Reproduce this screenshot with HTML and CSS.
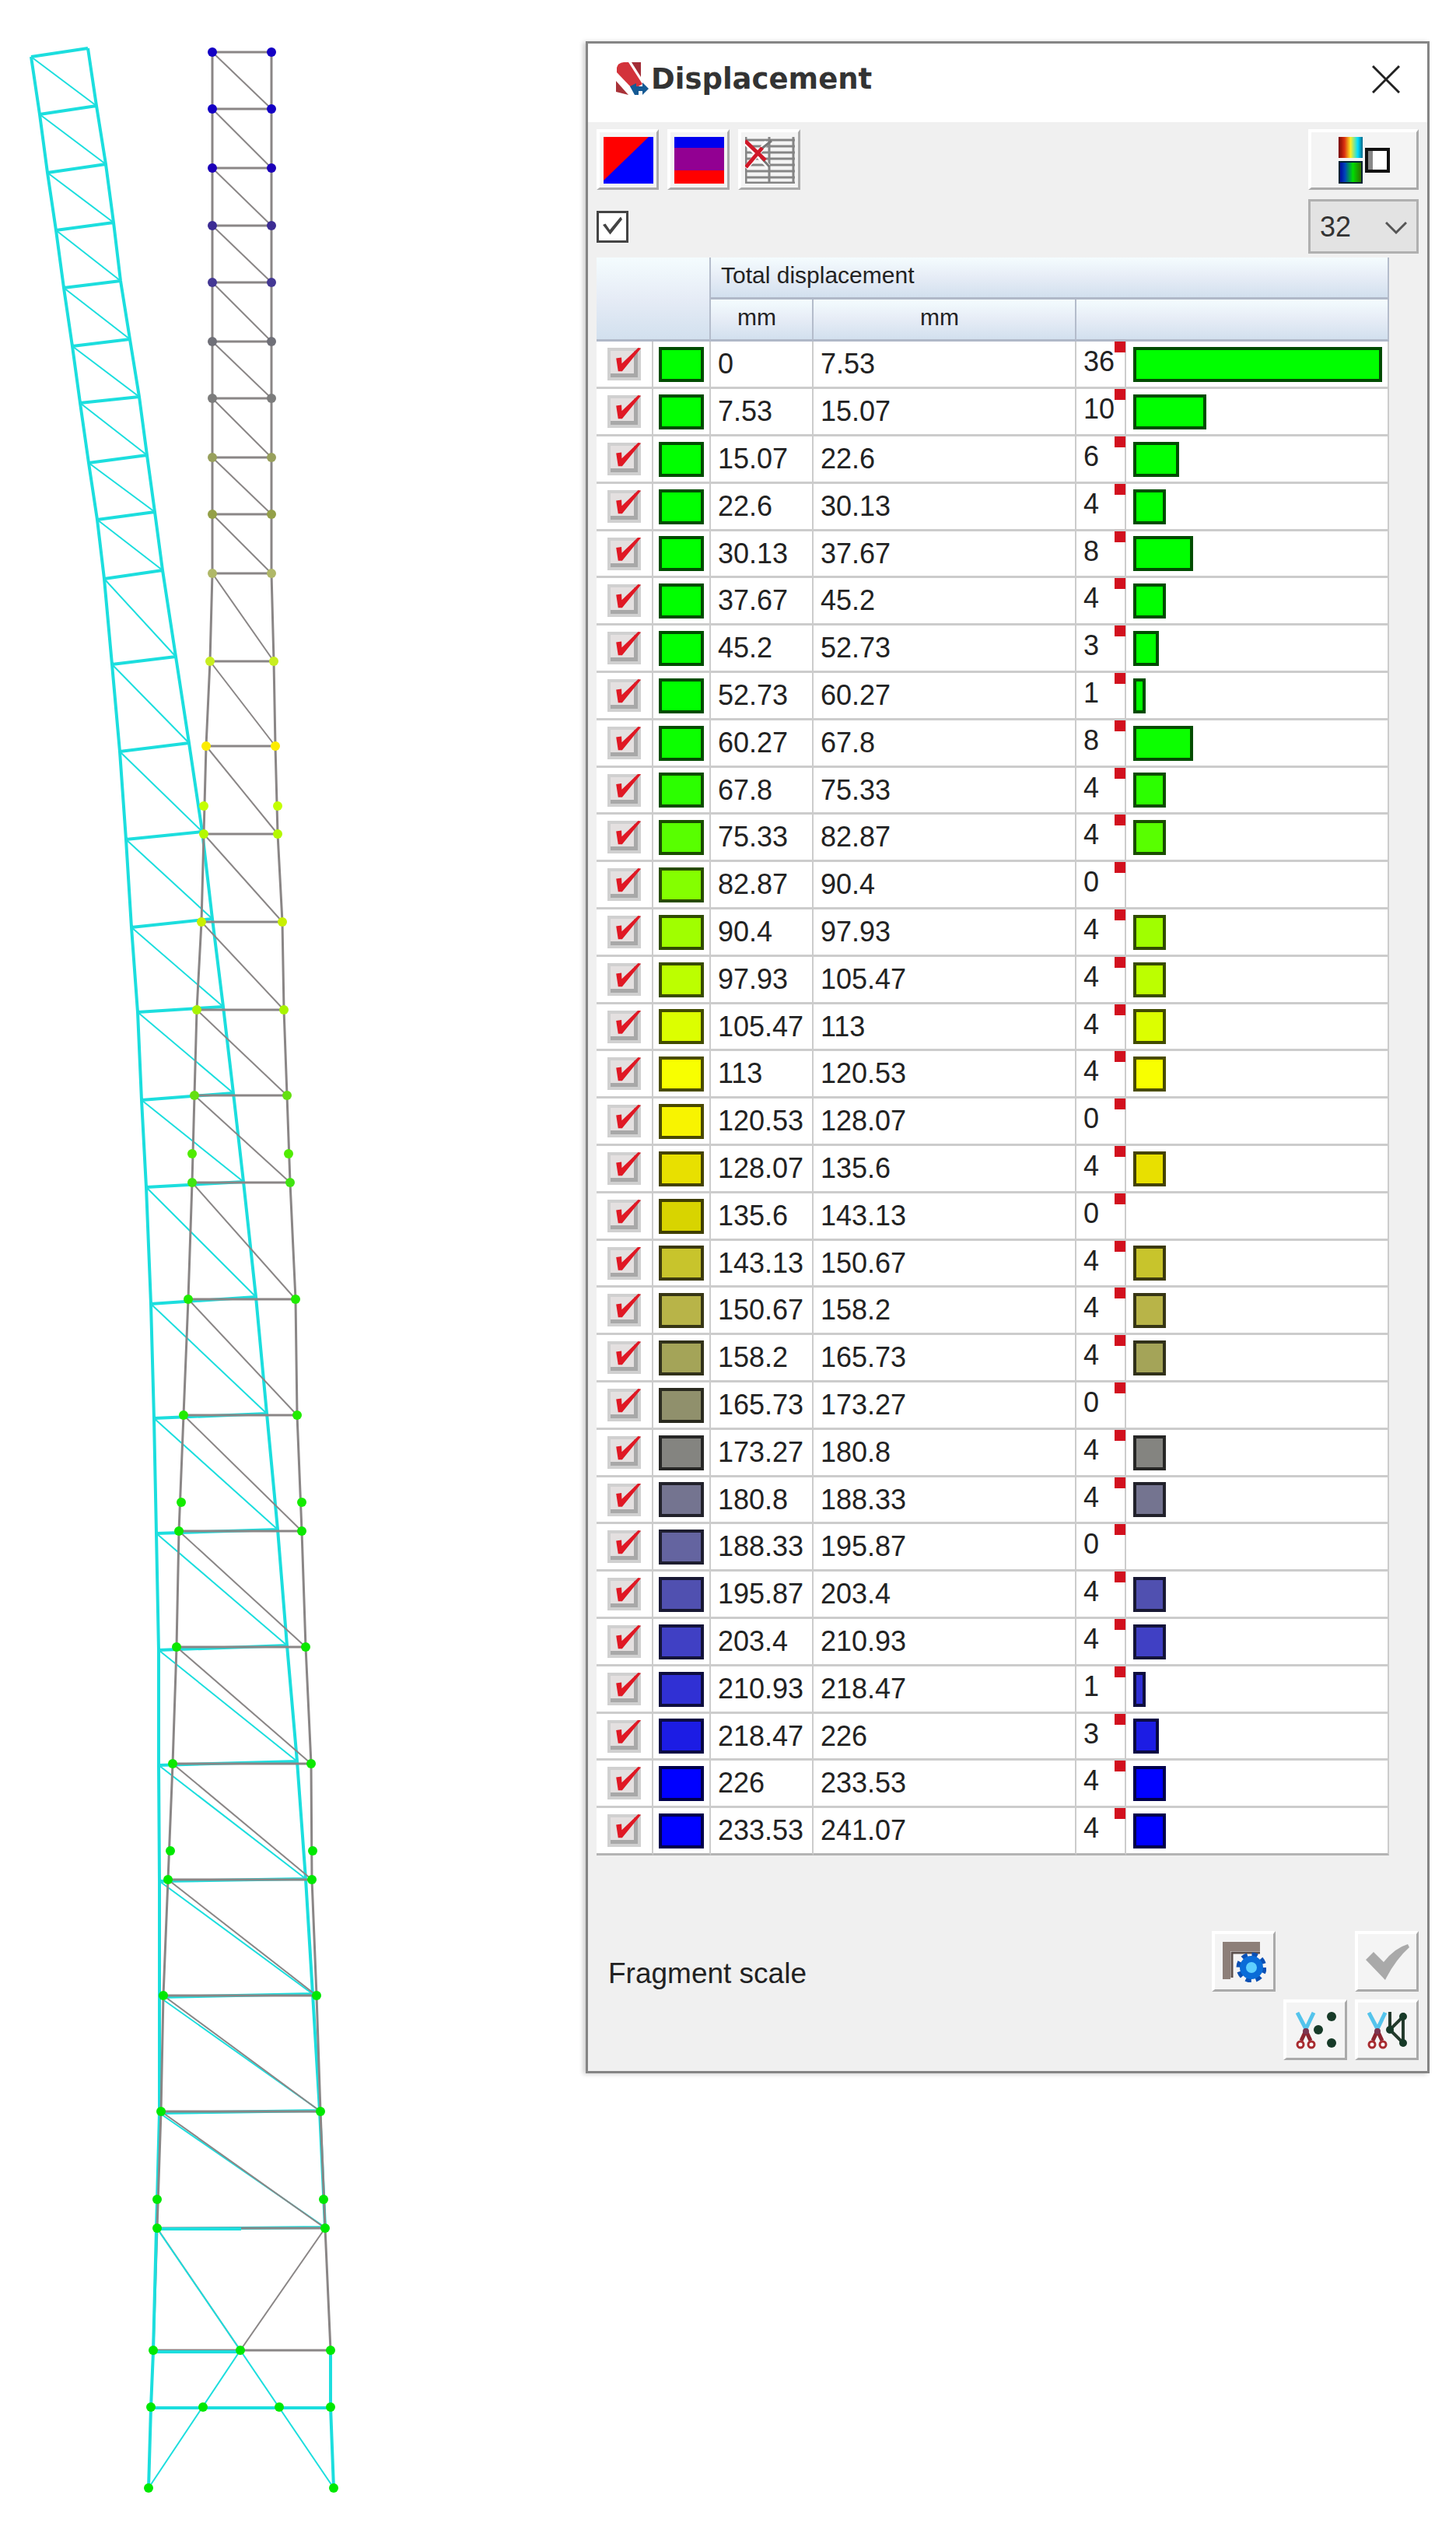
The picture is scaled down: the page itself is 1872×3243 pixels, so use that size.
FILE: index.html
```
<!DOCTYPE html>
<html lang="en">

<head>
    <meta charset="UTF-8">
    <meta name="viewport" content="width=device-width, initial-scale=1.0">
    <title>Displacement</title>
    <link rel="stylesheet" href="styles.css">
</head>

<body>
    <main class="workspace">
        <svg id="tower" class="tower" viewBox="0 0 753 3243" role="img" aria-label="Tower, deformed and original shape"></svg>

        <section class="panel">
            <header class="titlebar">
                <svg class="logo" viewBox="0 0 44 46" aria-hidden="true">
                    <path d="M2 8 Q3 2 11 1 L17 1 L35 29 L23 36 L2 14z" fill="#d3333b" />
                    <path d="M21 1 H33 V20z" fill="#a32c36" />
                    <path d="M1 25 L17 43 L1 39z" fill="#a83238" />
                    <path d="M3 22 L19 42" stroke="#fff" stroke-width="3" />
                    <path d="M19 32 L27 28 V32 H35 V27 L43 35 L35 43 V38 H30 V43 H25z" fill="#155a94" />
                </svg>
                <h1>Displacement</h1>
                <button class="close" aria-label="Close">
                    <svg viewBox="0 0 36 36"><path d="M1 1 L35 35 M35 1 L1 35" stroke="#222" stroke-width="3" /></svg>
                </button>
            </header>

            <div class="toolbar">
                <button class="tool" aria-label="Two colours">
                    <svg viewBox="0 0 64 60">
                        <path d="M0 0 H64 V60 H0z" fill="#00f" />
                        <path d="M0 0 H58 L0 56z" fill="#f00" />
                    </svg>
                </button>
                <button class="tool" aria-label="Colour bands">
                    <svg viewBox="0 0 64 60">
                        <path d="M0 0 H64 V14 H0z" fill="#00e" />
                        <path d="M0 14 H64 V43 H0z" fill="#920092" />
                        <path d="M0 43 H64 V60 H0z" fill="#f00" />
                    </svg>
                </button>
                <button class="tool" aria-label="Hide table">
                    <svg viewBox="0 0 64 60">
                        <path d="M1 0 V60 M31 0 V60 M62 0 V60 M0 4 H64 M0 12 H64 M0 20 H64 M0 28 H64 M0 36 H64 M0 44 H64 M0 52 H64 M0 59 H64" stroke="#858585" stroke-width="3" />
                        <path d="M1 8 L30 38 M28 7 L1 40" stroke="#fff" stroke-width="6" />
                        <path d="M20 16 L34 5 M20 26 L31 38" stroke="#777" stroke-width="3" />
                        <path d="M0 5 L26 30 M22 14 L1 39" stroke="#d01828" stroke-width="5" />
                    </svg>
                </button>
                <button class="tool tool-wide" aria-label="Colour scale">
                    <svg viewBox="0 0 66 60">
                        <defs>
                            <linearGradient id="warm">
                                <stop offset="0" stop-color="#700" />
                                <stop offset=".25" stop-color="#d31" />
                                <stop offset=".5" stop-color="#fe2" />
                                <stop offset=".8" stop-color="#0df" />
                                <stop offset="1" stop-color="#068" />
                            </linearGradient>
                            <linearGradient id="cold">
                                <stop offset="0" stop-color="#009" />
                                <stop offset=".25" stop-color="#04b" />
                                <stop offset=".6" stop-color="#0d0" />
                                <stop offset="1" stop-color="#360" />
                            </linearGradient>
                        </defs>
                        <rect width="31" height="27" fill="url(#warm)" />
                        <rect x="1" y="32" width="29" height="27" fill="url(#cold)" stroke="#023" stroke-width="2" />
                        <rect x="36" y="16" width="28" height="28" fill="#fff" stroke="#111" stroke-width="4" />
                        <path d="M38 18 H44 V42 H38z" fill="#888" />
                    </svg>
                </button>
            </div>

            <div class="options">
                <input type="checkbox" class="check-all" aria-label="Select all" checked>
                <div class="levels">
                    <select aria-label="Number of levels">
                        <option>32</option>
                        <option>16</option>
                        <option>8</option>
                    </select>
                    <svg viewBox="0 0 28 18" aria-hidden="true"><path d="M1 2 L14 15 L27 2" fill="none" stroke="#555" stroke-width="3" /></svg>
                </div>
            </div>

            <table class="scale">
                <colgroup>
                    <col class="col-check">
                    <col class="col-color">
                    <col class="col-from">
                    <col class="col-to">
                    <col class="col-count">
                    <col>
                </colgroup>
                <thead>
                    <tr>
                        <th colspan="2" rowspan="2"></th>
                        <th colspan="4" class="group">Total displacement</th>
                    </tr>
                    <tr>
                        <th>mm</th>
                        <th>mm</th>
                        <th colspan="2"></th>
                    </tr>
                </thead>
                <tbody id="scale-rows"></tbody>
            </table>

            <footer class="footer">
                <p>Fragment scale</p>
                <div class="actions">
                    <button class="tool settings" aria-label="Scale settings">
                        <svg viewBox="0 0 56 52">
                            <path d="M0 0 H48 V12 H10 V48 H0z" fill="#8d7f79" />
                            <path d="M12 46 V14 H48" fill="none" stroke="#5c504c" stroke-width="3" />
                            <circle cx="37" cy="33" r="16" fill="none" stroke="#0a50b4" stroke-width="7" stroke-dasharray="7 5.57" />
                            <circle cx="37" cy="33" r="11" fill="#5fd0ff" stroke="#0a6cd8" stroke-width="8" />
                        </svg>
                    </button>
                    <button class="tool apply" aria-label="Apply">
                        <svg viewBox="0 0 56 46">
                            <path d="M0 20 L10 10 L23 23 Q37 5 54 0 L56 4 Q38 20 25 46z" fill="#a9a9a9" />
                        </svg>
                    </button>
                    <button class="tool cut-nodes" aria-label="Fragment nodes">
                        <svg viewBox="0 0 52 48">
                            <path d="M2 1 L13 22 M23 1 L13 22" stroke="#54c4ec" stroke-width="5" />
                            <path d="M13 24 L7 37 M13 24 L19 37" stroke="#8c2430" stroke-width="5" />
                            <circle cx="13" cy="25" r="4" fill="#7c3450" />
                            <g fill="#fff" stroke="#a82c30" stroke-width="3">
                                <circle cx="6" cy="42" r="4" />
                                <circle cx="20" cy="42" r="4" />
                            </g>
                            <g fill="#173a28">
                                <circle cx="46" cy="6" r="6" />
                                <circle cx="29" cy="23" r="6" />
                                <circle cx="46" cy="40" r="6" />
                            </g>
                        </svg>
                    </button>
                    <button class="tool cut-bars" aria-label="Fragment elements">
                        <svg viewBox="0 0 52 48">
                            <path d="M2 1 L13 22 M23 1 L13 22" stroke="#54c4ec" stroke-width="5" />
                            <path d="M13 24 L7 37 M13 24 L19 37" stroke="#8c2430" stroke-width="5" />
                            <circle cx="13" cy="25" r="4" fill="#7c3450" />
                            <g fill="#fff" stroke="#a82c30" stroke-width="3">
                                <circle cx="6" cy="42" r="4" />
                                <circle cx="20" cy="42" r="4" />
                            </g>
                            <path d="M29 0 V23 L46 6 V40 L29 23" fill="none" stroke="#243a2c" stroke-width="4" />
                            <g fill="#173a28">
                                <circle cx="46" cy="6" r="5" />
                                <circle cx="29" cy="23" r="5" />
                                <circle cx="46" cy="40" r="5" />
                            </g>
                        </svg>
                    </button>
                </div>
            </footer>
        </section>
    </main>

    <script>
        // bounds of the intervals, interval i runs from bounds[i] to bounds[i + 1]
        const bounds = [0, 7.53, 15.07, 22.6, 30.13, 37.67, 45.2, 52.73, 60.27, 67.8, 75.33, 82.87, 90.4, 97.93,
            105.47, 113, 120.53, 128.07, 135.6, 143.13, 150.67, 158.2, 165.73, 173.27, 180.8, 188.33, 195.87,
            203.4, 210.93, 218.47, 226, 233.53, 241.07];
        const counts = [36, 10, 6, 4, 8, 4, 3, 1, 8, 4, 4, 0, 4, 4, 4, 4, 0, 4, 0, 4, 4, 4, 0, 4, 4, 0, 4, 4, 1, 3, 4, 4];
        const colors = ['#00ff00', '#00ff00', '#00ff00', '#00ff00', '#00ff00', '#00ff00', '#00ff00', '#00ff00',
            '#0cff00', '#2cff00', '#58ff00', '#84ff00', '#a0ff00', '#bcff00', '#dcff00', '#f8ff00', '#f8f400',
            '#e8e000', '#d8d400', '#c8c42c', '#b8b448', '#a4a458', '#90906c', '#848480', '#747490', '#6464a0',
            '#5050b0', '#4040c4', '#3030d4', '#1c1ce4', '#0000ff', '#0000ff'];

        document.querySelector('#scale-rows').innerHTML = counts.map((count, i) => `
            <tr>
                <td class="pick"><input type="checkbox" aria-label="Show ${bounds[i]} to ${bounds[i + 1]}" checked></td>
                <td class="color"><div class="swatch" style="background:${colors[i]}"></div></td>
                <td>${bounds[i]}</td>
                <td>${bounds[i + 1]}</td>
                <td class="count">${count}</td>
                <td class="bar-cell">${count ? `<div class="bar" style="width:${Math.round(count * 8.7 + 7)}px;background:${colors[i]}"></div>` : ''}</td>
            </tr>`).join('');

        // levels of the tower: left x, right x, y, node color, 1 = node without crossbar
        const levels = [
            [273, 349, 67, '#1400c4'], [273, 349, 140, '#1400c4'], [273, 349, 216, '#1c00b8'],
            [273, 349, 290, '#3c2c94'], [273, 349, 363, '#443894'], [273, 349, 439, '#707078'],
            [273, 349, 512, '#7c7c7c'], [273, 349, 588, '#98a05c'], [273, 349, 661, '#94a048'],
            [273, 349, 737, '#b0b868'], [270, 352, 850, '#c8ee20'], [265, 354, 959, '#fcec00'],
            [262, 357, 1036, '#c4ff00', 1], [262, 357, 1072, '#b4f800'], [259, 363, 1185, '#c8f000'],
            [253, 365, 1298, '#a8f400'], [250, 369, 1408, '#64e010'], [247, 371, 1483, '#50ec00', 1],
            [247, 373, 1520, '#40e410'], [242, 380, 1670, '#20ec00'], [236, 382, 1819, '#20ec00'],
            [233, 388, 1931, '#14ec00', 1], [230, 388, 1968, '#0ce800'], [227, 393, 2117, '#0ce800'],
            [222, 400, 2267, '#0ce800'], [219, 402, 2379, '#00e800', 1], [216, 401, 2416, '#00e800'],
            [210, 407, 2565, '#00e800'], [207, 412, 2714, '#00e800'], [202, 416, 2827, '#00e800', 1],
            [202, 418, 2864, '#00e800']
        ];
        // deformed shape: left x, left y, right x, right y
        const deformed = [
            [40, 73, 113, 62], [51, 147, 124, 136], [61, 222, 136, 211], [72, 296, 146, 286], [82, 370, 155, 361],
            [93, 445, 167, 436], [103, 518, 179, 510], [114, 595, 189, 585], [125, 668, 199, 658],
            [134, 744, 209, 733], [144, 854, 226, 844], [154, 966, 243, 955], [162, 1079, 260, 1069],
            [169, 1192, 273, 1181], [177, 1301, 287, 1294], [182, 1414, 300, 1405], [188, 1526, 313, 1519],
            [194, 1676, 329, 1667], [198, 1823, 343, 1817], [201, 1971, 357, 1966], [204, 2121, 369, 2115],
            [204, 2269, 382, 2264], [205, 2418, 393, 2415], [205, 2567, 402, 2563], [205, 2716, 411, 2713],
            [201, 2865, 418, 2863]
        ];
        const foot = [[197, 3021], [309, 3021], [425, 3021], [194, 3094], [261, 3094], [359, 3094], [425, 3094],
            [191, 3198], [429, 3198]];

        // p: list of [left x, left y, right x, right y]
        function frame(p) {
            const left = p.map(q => q[0] + ' ' + q[1]).join(' L');
            const right = p.map(q => q[2] + ' ' + q[3]).join(' L');
            return `M${left} M${right} ` + p.map(q => `M${q[0]} ${q[1]} L${q[2]} ${q[3]}`).join(' ');
        }

        function braces(p) {
            return p.slice(1).map((q, i) => `M${p[i][0]} ${p[i][1]} L${q[2]} ${q[3]}`).join(' ');
        }

        const original = levels.filter(l => !l[4]).map(l => [l[0], l[2], l[1], l[2]]);
        const dot = (x, y, c) => `<circle cx="${x}" cy="${y}" r="6" fill="${c}"/>`;

        document.querySelector('#tower').innerHTML = `
            <path class="deformed" d="${frame(deformed)}"/>
            <path class="deformed thin" d="${braces(deformed)}"/>
            <path class="original" d="${frame(original)} M202 2864 L197 3021 H425 L418 2864"/>
            <path class="original thin" d="${braces(original)} M202 2864 L309 3021 L418 2864"/>
            <path class="deformed" d="M201 2865 L197 3023 H309 M197 3023 L194 3095 L191 3198 M202 2865 H310 M194 3095 H425 M425 3021 V3094 L429 3198"/>
            <path class="deformed thin" d="M203 2866 L309 3021 L429 3198 M309 3021 L191 3198"/>
            ${levels.map(l => dot(l[0], l[2], l[3]) + dot(l[1], l[2], l[3])).join('')}
            ${foot.map(f => dot(f[0], f[1], '#00e800')).join('')}`;
    </script>
</body>

</html>
```
FILE: styles.css
```
* {
    box-sizing: border-box;
}

body {
    margin: 0;
    background-color: #fff;
    font-family: "Liberation Sans", Arial, sans-serif;
    color: #222;
}

.workspace {
    display: grid;
    grid-template-columns: 753fr 1085fr 34fr;
    align-items: start;
}

/* tower drawing */
.tower {
    display: block;
    width: 100%;
}

.tower path {
    fill: none;
    stroke-width: 3;
}

.tower .deformed {
    stroke: #1cdede;
    stroke-width: 4;
}

.tower .original {
    stroke: #8a8686;
}

.tower path.thin {
    stroke-width: 2;
}

/* window */
.panel {
    margin-top: 53px;
    border: 3px solid #858585;
    background-color: #f0f0f0;
    box-shadow: -3px 1px 6px rgba(0, 0, 0, 0.2);
}

.titlebar {
    display: flex;
    align-items: center;
    height: 101px;
    padding: 0 35px 10px 35px;
    background-color: #fff;
}

.logo {
    width: 44px;
    height: 46px;
}

.titlebar h1 {
    margin: 0 auto 0 2px;
    font: bold 37px "DejaVu Sans", Verdana, sans-serif;
    color: #333;
}

.close {
    display: flex;
    padding: 0;
    border: 0;
    background: none;
}

.close svg {
    width: 36px;
    height: 36px;
}

.toolbar {
    display: flex;
    gap: 11px;
    padding: 9px 11px 12px;
}

.tool {
    display: flex;
    align-items: center;
    justify-content: center;
    width: 80px;
    height: 78px;
    padding: 0;
    border: 4px solid #fff;
    border-right: 3px solid #aaa;
    border-bottom: 3px solid #aaa;
    background-color: #f4f4f4;
}

.tool svg {
    width: 64px;
    height: 60px;
}

.tool-wide {
    width: 142px;
    margin-left: auto;
}

.tool-wide svg {
    width: 66px;
}

.options {
    display: flex;
    align-items: center;
    justify-content: space-between;
    padding: 0 11px 5px;
}

.check-all {
    position: relative;
    appearance: none;
    width: 41px;
    height: 41px;
    margin: 0;
    border: 3px solid #444;
    background-color: #fff;
}

.check-all:checked::before {
    content: "";
    position: absolute;
    inset: 5px;
    background-color: #444;
    clip-path: polygon(0 42%, 14% 36%, 36% 68%, 92% 0, 100% 14%, 38% 92%);
}

.levels {
    position: relative;
}

.levels select {
    display: block;
    appearance: none;
    width: 142px;
    height: 70px;
    padding: 0 12px;
    border: 3px solid #b0b0b0;
    border-radius: 0;
    background-color: #e3e3e3;
    font: 36px "Liberation Sans", Arial, sans-serif;
    color: #333;
}

.levels svg {
    position: absolute;
    right: 15px;
    top: 28px;
    width: 28px;
    height: 18px;
    pointer-events: none;
}

/* color scale */
.scale {
    width: calc(100% - 60px);
    margin-left: 11px;
    table-layout: fixed;
    border-collapse: separate;
    border-spacing: 0;
}

.col-check {
    width: 73px;
}

.col-color {
    width: 74px;
}

.col-from {
    width: 132px;
}

.col-to {
    width: 338px;
}

.col-count {
    width: 64px;
}

.scale th {
    height: 54px;
    padding: 0 12px 6px 0;
    border-right: 2px solid #b4bccb;
    border-bottom: 3px solid #b0b8c8;
    background: linear-gradient(#f4fcfe, #e6ecf6 50%, #d2e0ee);
    font-size: 30px;
    font-weight: normal;
    line-height: 34px;
}

.scale th.group {
    padding-left: 13px;
    text-align: left;
}

.scale td {
    height: 61px;
    padding: 0 0 0 9px;
    border-right: 2px solid #ccc;
    border-bottom: 3px solid #ccc;
    background-color: #fff;
    font-size: 36px;
    line-height: 48px;
    white-space: nowrap;
}

.scale tr:nth-child(5n) td {
    height: 60px;
}

.scale tr:last-child td {
    border-bottom-color: #b4b4b4;
}

.scale td.pick {
    padding-left: 14px;
}

.scale td.color {
    padding-left: 7px;
}

.pick input {
    position: relative;
    display: block;
    appearance: none;
    width: 43px;
    height: 42px;
    margin: 0;
    border: 4px solid #d0d0d0;
    background-color: #e4e0e0;
    box-shadow: inset -5px -5px 0 #a8a8a8;
}

.pick input:checked::before {
    content: "";
    position: absolute;
    inset: -4px;
    background-color: #e01824;
    clip-path: polygon(26% 32%, 42% 30%, 43% 48%, 92% 0, 100% 2%, 44% 72%, 32% 72%);
}

.swatch,
.bar {
    width: 58px;
    height: 45px;
    border: 4px solid rgba(0, 0, 0, 0.7);
}

.scale td.count {
    position: relative;
    padding-bottom: 6px;
}

.count::after {
    content: "";
    position: absolute;
    top: 0;
    right: -1px;
    width: 14px;
    height: 14px;
    background-color: #d2101e;
}

/* bottom of the window */
.footer {
    display: flex;
    justify-content: space-between;
    padding: 97px 11px 14px 26px;
}

.footer p {
    margin: 34px 0 0;
    font-size: 37px;
    line-height: 42px;
}

.actions {
    display: grid;
    grid-template-columns: repeat(3, 82px);
    gap: 10px;
}

.actions .tool {
    width: 82px;
}

.actions .apply,
.actions .cut-bars {
    grid-column: 3;
}

.actions .cut-nodes {
    grid-column: 2;
}

.actions svg {
    width: 52px;
    height: 48px;
}

.actions .settings svg,
.actions .apply svg {
    width: 56px;
    height: 52px;
}
```
